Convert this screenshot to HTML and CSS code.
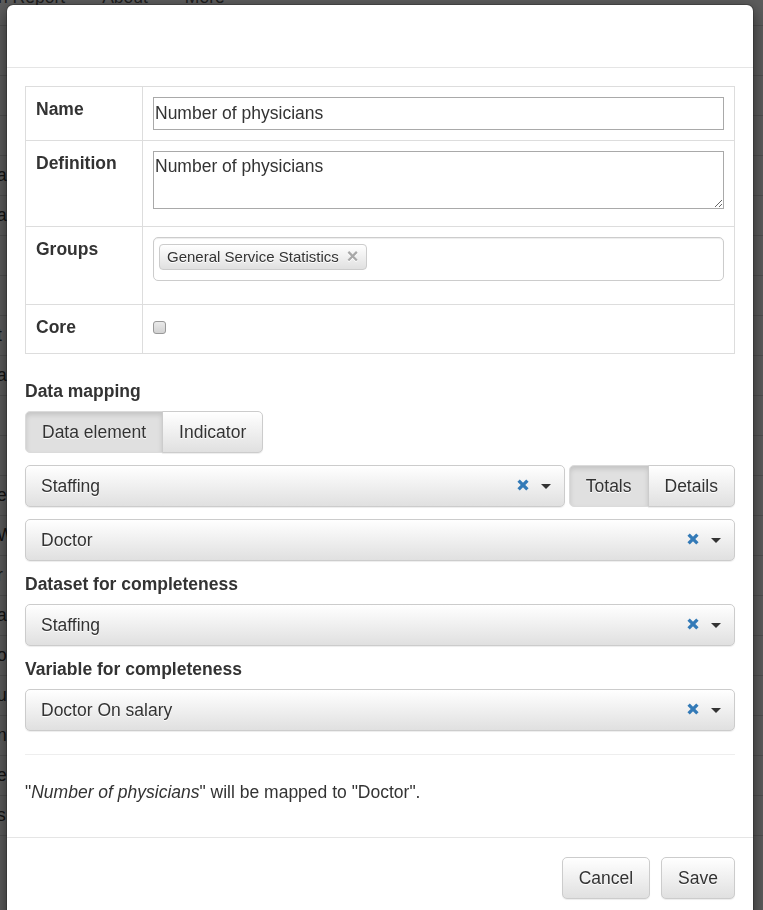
FILE: index.html
```html
<!DOCTYPE html>
<html>
<head>
<meta charset="utf-8">
<title>Edit variable</title>
<link rel="stylesheet" href="styles.css">
</head>
<body>
<div class="page">
  <nav class="navbar">
    <div class="nav-inner">
      <span class="nav-item nav-first">n Report</span>
      <span class="nav-item">About</span>
      <span class="nav-item">More</span>
    </div>
  </nav>
  <div class="bg-table">
    <div class="bg-row"></div>
    <div class="bg-row"></div>
    <div class="bg-row"><span class="bg-text">a</span></div>
    <div class="bg-row"><span class="bg-text">a</span></div>
    <div class="bg-row"></div>
    <div class="bg-row"></div>
    <div class="bg-row"><span class="bg-text">t</span></div>
    <div class="bg-row"><span class="bg-text">a</span></div>
    <div class="bg-row"></div>
    <div class="bg-row"></div>
    <div class="bg-row"><span class="bg-text">e</span></div>
    <div class="bg-row"><span class="bg-text">W</span></div>
    <div class="bg-row"><span class="bg-text">r</span></div>
    <div class="bg-row"><span class="bg-text">a</span></div>
    <div class="bg-row"><span class="bg-text">o</span></div>
    <div class="bg-row"><span class="bg-text">u</span></div>
    <div class="bg-row"><span class="bg-text">n</span></div>
    <div class="bg-row"><span class="bg-text">e</span></div>
    <div class="bg-row"><span class="bg-text">s</span></div>
  </div>
</div>

<div class="backdrop"></div>

<div class="modal">
  <div class="modal-header"></div>
  <div class="modal-body">
    <table class="props">
      <tr class="row-name">
        <th>Name</th>
        <td><input class="text-input" type="text" value="Number of physicians"></td>
      </tr>
      <tr>
        <th>Definition</th>
        <td><textarea class="text-area">Number of physicians</textarea></td>
      </tr>
      <tr>
        <th>Groups</th>
        <td>
          <div class="multi">
            <span class="tag">General Service Statistics<span class="tag-close">×</span></span>
          </div>
        </td>
      </tr>
      <tr>
        <th>Core</th>
        <td><input class="check" type="checkbox"></td>
      </tr>
    </table>

    <div class="field-label">Data mapping</div>
    <div class="btn-group mapping-toggle">
      <button class="btn active">Data element</button><button class="btn">Indicator</button>
    </div>

    <div class="select-row">
      <div class="select">
        <span class="select-text">Staffing</span>
        <svg class="clear" viewBox="0 0 12 12" width="12" height="12"><path d="M1.6 1.6 L10.4 10.4 M10.4 1.6 L1.6 10.4" stroke="#337ab7" stroke-width="3.3" fill="none"/></svg>
        <span class="caret"></span>
      </div>
      <div class="btn-group">
        <button class="btn active">Totals</button><button class="btn">Details</button>
      </div>
    </div>

    <div class="select select-gap">
      <span class="select-text">Doctor</span>
      <svg class="clear" viewBox="0 0 12 12" width="12" height="12"><path d="M1.6 1.6 L10.4 10.4 M10.4 1.6 L1.6 10.4" stroke="#337ab7" stroke-width="3.3" fill="none"/></svg>
      <span class="caret"></span>
    </div>

    <div class="field-label">Dataset for completeness</div>
    <div class="select select-gap">
      <span class="select-text">Staffing</span>
      <svg class="clear" viewBox="0 0 12 12" width="12" height="12"><path d="M1.6 1.6 L10.4 10.4 M10.4 1.6 L1.6 10.4" stroke="#337ab7" stroke-width="3.3" fill="none"/></svg>
      <span class="caret"></span>
    </div>

    <div class="field-label">Variable for completeness</div>
    <div class="select">
      <span class="select-text">Doctor On salary</span>
      <svg class="clear" viewBox="0 0 12 12" width="12" height="12"><path d="M1.6 1.6 L10.4 10.4 M10.4 1.6 L1.6 10.4" stroke="#337ab7" stroke-width="3.3" fill="none"/></svg>
      <span class="caret"></span>
    </div>

    <hr class="divider">

    <p class="summary">"<i>Number of physicians</i>" will be mapped to "Doctor".</p>
  </div>
  <div class="modal-footer">
    <button class="btn">Cancel</button>
    <button class="btn">Save</button>
  </div>
</div>
</body>
</html>
```

FILE: styles.css
```css
html, body {
  margin: 0;
  padding: 0;
  height: 100%;
  overflow: hidden;
}

body {
  background: #fff;
  color: #333;
  font-family: "Liberation Sans", Arial, sans-serif;
  font-size: 17.5px;
  line-height: 25px;
}

/* ---------- page behind the modal ---------- */
.navbar {
  height: 25px;
  border-bottom: 1px solid #ddd;
  overflow: hidden;
  color: #555;
}

.nav-inner {
  display: flex;
  margin-top: -15px;
  line-height: 25px;
  white-space: nowrap;
}

.nav-item {
  margin-left: 37px;
}

.nav-first {
  margin-left: -2px;
}

.bg-table {
  margin-top: 49px;
  border-bottom: 1px solid #ddd;
}

.bg-row {
  height: 39px;
  border-top: 1px solid #ddd;
  line-height: 39px;
  overflow: hidden;
}

.bg-text {
  margin-left: -3px;
}

.backdrop {
  position: fixed;
  inset: 0;
  background: rgba(0, 0, 0, 0.64);
}

/* ---------- modal ---------- */
.modal {
  position: fixed;
  left: 6px;
  top: 4px;
  width: 748px;
  box-sizing: border-box;
  background: #fff;
  background-clip: padding-box;
  border: 1px solid rgba(0, 0, 0, 0.2);
  border-radius: 7px;
  box-shadow: 0 5px 15px rgba(0, 0, 0, 0.5);
}

.modal-header {
  height: 62px;
  border-bottom: 1px solid #e5e5e5;
}

.modal-body {
  padding: 18px 18px 19px;
}

.modal-footer {
  display: flex;
  justify-content: flex-end;
  gap: 11px;
  padding: 19px 18px 40px;
  border-top: 1px solid #e5e5e5;
}

/* ---------- properties table ---------- */
.props {
  width: 100%;
  border-collapse: collapse;
  border: 1px solid #ddd;
  margin-bottom: 25px;
}

.props th,
.props td {
  border: 1px solid #ddd;
  padding: 10px;
  vertical-align: top;
  text-align: left;
}

.props th {
  width: 96px;
  font-weight: bold;
}

.text-input {
  display: block;
  width: 100%;
  height: 33px;
  box-sizing: border-box;
  margin: 0;
  padding: 0 1px;
  border: 1px solid #a9a9a9;
  font: inherit;
  color: #333;
  background: #fff;
}

.text-area {
  display: block;
  width: 100%;
  height: 58px;
  box-sizing: border-box;
  margin: 0 0 7px;
  padding: 3px 1px 2px;
  border: 1px solid #a9a9a9;
  font: inherit;
  line-height: 22px;
  color: #333;
  resize: vertical;
}

.multi {
  height: 44px;
  box-sizing: border-box;
  margin-bottom: 13px;
  padding: 6px 5px;
  border: 1px solid #ccc;
  border-radius: 5px;
  box-shadow: inset 0 1px 1px rgba(0, 0, 0, 0.075);
}

.tag {
  display: inline-flex;
  align-items: center;
  height: 26px;
  box-sizing: border-box;
  padding: 0 8px 0 7px;
  border: 1px solid #ccc;
  border-radius: 4px;
  background-image: linear-gradient(to bottom, #fff 0, #e0e0e0 100%);
  font-size: 15px;
  line-height: 24px;
  color: #333;
  text-shadow: 0 1px 0 #fff;
}

.tag-close {
  margin-left: 8px;
  font-size: 20px;
  font-weight: bold;
  line-height: 1;
  color: #a8a8a8;
  margin-top: -3px;
}

.check {
  -webkit-appearance: none;
  appearance: none;
  display: block;
  width: 13px;
  height: 13px;
  margin: 6px 0 9px;
  border: 1px solid #999;
  border-radius: 3px;
  background: linear-gradient(to bottom, #eaeaea, #d2d2d2);
}

/* ---------- form area ---------- */
.field-label {
  font-weight: bold;
  line-height: 25px;
  margin-bottom: 7px;
}

.btn-group {
  display: flex;
  flex: none;
}

.mapping-toggle {
  display: inline-flex;
  margin-bottom: 12px;
  vertical-align: top;
}

.btn {
  display: inline-block;
  height: 42px;
  box-sizing: border-box;
  margin: 0;
  padding: 7.5px 16px;
  border: 1px solid #ccc;
  border-radius: 5px;
  background-color: #fff;
  background-image: linear-gradient(to bottom, #fff 0, #e0e0e0 100%);
  box-shadow: inset 0 1px 0 rgba(255, 255, 255, 0.15), 0 1px 1px rgba(0, 0, 0, 0.075);
  font-family: "Liberation Sans", Arial, sans-serif;
  font-size: 17.5px;
  line-height: 25px;
  color: #333;
  text-shadow: 0 1px 0 #fff;
  white-space: nowrap;
}

.btn.active {
  background-color: #e0e0e0;
  background-image: none;
  border-color: #dbdbdb;
  box-shadow: inset 0 3px 5px rgba(0, 0, 0, 0.125);
}

.btn-group .btn:first-child {
  border-top-right-radius: 0;
  border-bottom-right-radius: 0;
}

.btn-group .btn:last-child {
  margin-left: -1px;
  border-top-left-radius: 0;
  border-bottom-left-radius: 0;
}

.select-row {
  display: flex;
  gap: 4px;
  margin-bottom: 12px;
}

.select {
  display: flex;
  align-items: center;
  flex: 1;
  height: 42px;
  box-sizing: border-box;
  padding: 0 13px 0 15px;
  border: 1px solid #ccc;
  border-radius: 5px;
  background-image: linear-gradient(to bottom, #fff 0, #e0e0e0 100%);
  box-shadow: inset 0 1px 0 rgba(255, 255, 255, 0.15), 0 1px 1px rgba(0, 0, 0, 0.075);
  text-shadow: 0 1px 0 #fff;
}

.select-gap {
  margin-bottom: 11px;
}

.select-text {
  flex: 1;
  white-space: nowrap;
}

.clear {
  display: block;
  margin-top: -3px;
  margin-right: 12px;
}

.caret {
  width: 0;
  height: 0;
  border-top: 5px solid #333;
  border-left: 5px solid transparent;
  border-right: 5px solid transparent;
}

.divider {
  margin: 23px 0 25px;
  border: 0;
  border-top: 1px solid #eee;
}

.summary {
  margin: 0 0 13px;
}
```
